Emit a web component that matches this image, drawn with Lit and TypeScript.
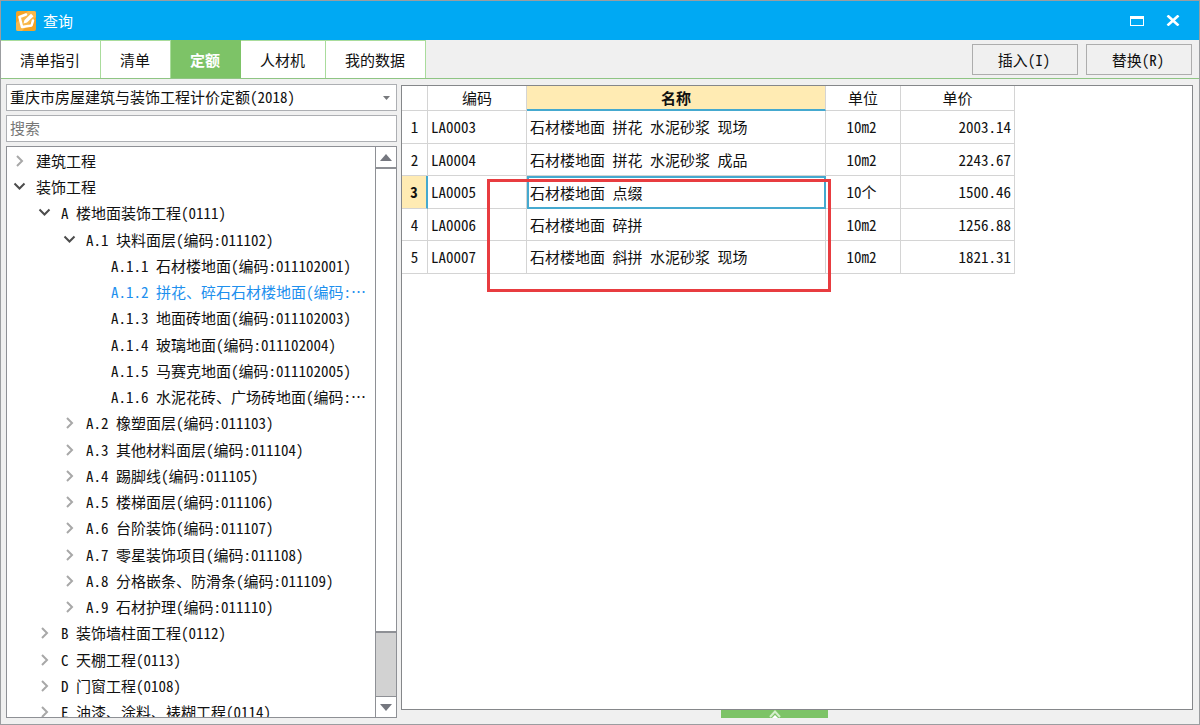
import { LitElement, html, css, svg } from "lit";
import { customElement, property, state } from "lit/decorators.js";
import { classMap } from "lit/directives/class-map.js";

interface TreeNode {
  level: number;
  text: string;
  mark: "open" | "closed" | "leaf";
  selected?: boolean;
}

const NODES: TreeNode[] = [
  { level: 0, text: "建筑工程", mark: "closed" },
  { level: 0, text: "装饰工程", mark: "open" },
  { level: 1, text: "A 楼地面装饰工程(0111)", mark: "open" },
  { level: 2, text: "A.1 块料面层(编码:011102)", mark: "open" },
  { level: 3, text: "A.1.1 石材楼地面(编码:011102001)", mark: "leaf" },
  { level: 3, text: "A.1.2 拼花、碎石石材楼地面(编码:…", mark: "leaf", selected: true },
  { level: 3, text: "A.1.3 地面砖地面(编码:011102003)", mark: "leaf" },
  { level: 3, text: "A.1.4 玻璃地面(编码:011102004)", mark: "leaf" },
  { level: 3, text: "A.1.5 马赛克地面(编码:011102005)", mark: "leaf" },
  { level: 3, text: "A.1.6 水泥花砖、广场砖地面(编码:…", mark: "leaf" },
  { level: 2, text: "A.2 橡塑面层(编码:011103)", mark: "closed" },
  { level: 2, text: "A.3 其他材料面层(编码:011104)", mark: "closed" },
  { level: 2, text: "A.4 踢脚线(编码:011105)", mark: "closed" },
  { level: 2, text: "A.5 楼梯面层(编码:011106)", mark: "closed" },
  { level: 2, text: "A.6 台阶装饰(编码:011107)", mark: "closed" },
  { level: 2, text: "A.7 零星装饰项目(编码:011108)", mark: "closed" },
  { level: 2, text: "A.8 分格嵌条、防滑条(编码:011109)", mark: "closed" },
  { level: 2, text: "A.9 石材护理(编码:011110)", mark: "closed" },
  { level: 1, text: "B 装饰墙柱面工程(0112)", mark: "closed" },
  { level: 1, text: "C 天棚工程(0113)", mark: "closed" },
  { level: 1, text: "D 门窗工程(0108)", mark: "closed" },
  { level: 1, text: "E 油漆、涂料、裱糊工程(0114)", mark: "closed" },
];

const ROWS = [
  ["LA0003", "石材楼地面 拼花 水泥砂浆 现场", "10m2", "2003.14"],
  ["LA0004", "石材楼地面 拼花 水泥砂浆 成品", "10m2", "2243.67"],
  ["LA0005", "石材楼地面 点缀", "10个", "1500.46"],
  ["LA0006", "石材楼地面 碎拼", "10m2", "1256.88"],
  ["LA0007", "石材楼地面 斜拼 水泥砂浆 现场", "10m2", "1821.31"],
];

const reset = css`
  * { box-sizing: border-box; }
  button, select, input {
    font: inherit;
    font-feature-settings: inherit;
    color: inherit;
    margin: 0;
    border-radius: 0;
    outline: none;
  }
`;

@customElement("quota-tree")
class QuotaTree extends LitElement {
  static styles = [reset, css`
    :host { display: flex; min-height: 0; background: #fff; border: 1px solid #8e9095; overflow: hidden; }
    .list { flex: 1; min-width: 0; margin: 0; padding: 1px 0 0; list-style: none; overflow: hidden; }
    .node { display: flex; align-items: center; height: 26px; line-height: 26px; white-space: nowrap; color: #111; }
    .node:nth-child(4n) { height: 27px; }
    .l0 { padding-left: 4px; }
    .l1 { padding-left: 29px; }
    .l2 { padding-left: 54px; }
    .l3 { padding-left: 79px; }
    .selected { color: #1e90ee; }
    .toggle { display: flex; flex: none; align-items: center; justify-content: center; width: 17px; height: 24px; margin-right: 8px; padding: 0; border: 0; background: none; }
    .blank { flex: none; width: 25px; }
    .bar { display: flex; flex-direction: column; flex: none; width: 21px; background: #d2d2d2; border-left: 1px solid #8e9095; }
    .step { display: flex; flex: none; align-items: center; justify-content: center; height: 21px; padding: 0; border: 0; background: #fff; }
    .up { border-bottom: 1px solid #8e9095; }
    .down { border-top: 1px solid #8e9095; }
    .track { flex: 1; }
    .thumb { height: 88%; background: #fff; border: solid #8e9095; border-width: 1px 0 2px; }
  `];

  mark(kind: string) {
    if (kind === "leaf") return html`<span class="blank"></span>`;
    const open = kind === "open";
    return html`<button class="toggle" aria-label=${open ? "收起" : "展开"}>
      <svg width="14" height="14" viewBox="0 0 14 14" fill="none" stroke-width="2">
        ${open
          ? svg`<path d="M1.500 3.500l5 5 5-5" stroke="#4c4c4c" />`
          : svg`<path d="M4 2l5 5-5 5" stroke="#a8a8a8" />`}
      </svg>
    </button>`;
  }

  render() {
    return html`
      <ul class="list" role="tree">
        ${NODES.map((n) => html`<li role="treeitem" class=${classMap({ node: true, ["l" + n.level]: true, selected: !!n.selected })}>
          ${this.mark(n.mark)}<span>${n.text}</span></li>`)}
      </ul>
      <div class="bar">
        <button class="step up" aria-label="向上滚动"><svg width="12" height="7" viewBox="0 0 12 7"><path d="M6 0l6 7H0z" fill="#75777f" /></svg></button>
        <div class="track"><div class="thumb"></div></div>
        <button class="step down" aria-label="向下滚动"><svg width="12" height="7" viewBox="0 0 12 7"><path d="M0 0h12L6 7z" fill="#75777f" /></svg></button>
      </div>`;
  }
}

@customElement("quota-grid")
class QuotaGrid extends LitElement {
  @property({ type: Number }) current = 2;

  static styles = [reset, css`
    :host { display: block; position: relative; background: #fff; border: 1px solid #85878a; overflow: hidden; }
    .grid { border-collapse: separate; border-spacing: 0; table-layout: fixed; width: 613px; line-height: 20px; color: #111; }
    .c-no { width: 26px; }
    .c-code { width: 99px; }
    .c-name { width: 299px; }
    .c-unit { width: 75px; }
    .c-price { width: 114px; }
    th, td { padding: 0 3px; border: solid #d4d4d4; border-width: 0 1px 1px 0; font-weight: 400; white-space: nowrap; overflow: hidden; }
    .head th { height: 25px; }
    .head .active { background: #ffebb3; border-bottom: 2px solid #45a9cf; font-weight: 700; }
    .row td, .row th { height: 33px; }
    .row:nth-child(even) td, .row:nth-child(even) th { height: 32px; }
    .no { padding: 0; text-align: center; }
    .unit { padding-right: 6px; text-align: center; }
    .price { text-align: right; }
    .current .no { background: #ffebb3; font-weight: 700; border-right: 2px solid #45a9cf; }
    .current .name { border: 0; outline: 2px solid #45a9cf; outline-offset: -2px; }
    .marker { position: absolute; left: 85px; top: 93px; width: 344px; height: 113px; border: 3px solid #e83c40; pointer-events: none; }
  `];

  render() {
    return html`
      <table class="grid">
        <colgroup><col class="c-no" /><col class="c-code" /><col class="c-name" /><col class="c-unit" /><col class="c-price" /></colgroup>
        <thead><tr class="head"><th></th><th>编码</th><th class="active">名称</th><th>单位</th><th>单价</th></tr></thead>
        <tbody>
          ${ROWS.map(([code, name, unit, price], i) => html`<tr class=${classMap({ row: true, current: i === this.current })}>
            <th class="no" scope="row">${i + 1}</th><td>${code}</td><td class="name">${name}</td><td class="unit">${unit}</td><td class="price">${price}</td></tr>`)}
        </tbody>
      </table>
      <div class="marker"></div>`;
  }
}

@customElement("app-root")
class AppRoot extends LitElement {
  @state() tab = 2;

  static styles = [reset, css`
    :host {
      display: flex;
      flex-direction: column;
      box-sizing: border-box;
      height: 100vh;
      border: 1px solid #9b9da0;
      background: #f0f0f0;
      color: #111;
      font-family: "Noto Sans CJK SC", sans-serif;
      font-size: 15px;
      line-height: 20px;
      font-feature-settings: "hwid";
    }
    .title { display: flex; align-items: center; flex: none; height: 39px; padding: 0 16px 0 15px; background: #00a9f3; color: #fff; }
    .name { flex: 1; margin-left: 7px; }
    .win { display: flex; align-items: center; justify-content: center; width: 20px; height: 20px; margin-left: 16px; padding: 0; border: 0; background: none; }
    .tools { display: flex; flex: none; height: 39px; padding-right: 7px; border-bottom: 1px solid #8fc584; }
    .tabs { display: flex; flex: 1; }
    .tab { padding: 1px 20px 0 19px; border: solid #a9dc9c; border-width: 1px 1px 0 0; background: #fff; }
    .tab.on { background: #7dc367; border-color: #7dc367; color: #fff; font-weight: 700; }
    .actions { display: flex; gap: 8px; padding: 4px 0 3px; }
    .action { width: 106px; padding: 0 2px 0 0; border: 1px solid #adadad; background: #f0f0f0; }
    .body { display: grid; grid-template-columns: 391px 1fr; flex: 1; gap: 4px; min-height: 0; padding: 5px 6px 6px 5px; }
    .side { display: flex; flex-direction: column; gap: 4px; min-height: 0; }
    .pick { display: flex; align-items: center; position: relative; }
    .field { width: 100%; height: 27px; padding: 0 3px 2px; border: 1px solid #adafb3; background: #fff; appearance: none; }
    .field::placeholder { color: #777; opacity: 1; }
    .caret { position: absolute; right: 7px; pointer-events: none; }
    .tree { flex: 1; }
    .main { display: flex; flex-direction: column; min-width: 0; padding-top: 1px; }
    .sheet { flex: 1; }
    .foot { display: flex; justify-content: center; flex: none; height: 8px; padding-right: 45px; }
    .fold { display: flex; justify-content: center; width: 107px; height: 8px; padding: 0; border: 0; background: #7dc367; }
  `];

  render() {
    const tabs = ["清单指引", "清单", "定额", "人材机", "我的数据"];
    return html`
      <header class="title">
        <svg width="20" height="20" viewBox="0 0 20 20" fill="none">
          <rect width="20" height="20" rx="2" fill="#f3a326" />
          <path d="M0 12L12 0h6a2 2 0 0 1 2 2v4L6 20H2a2 2 0 0 1-2-2z" fill="#f8b84c" />
          <path d="M10 3.500L3.500 6l2.500 10 9.500-1.500 1.500-5" stroke="#fff" stroke-width="2.600" stroke-linejoin="round" stroke-linecap="round" />
          <path d="M7.500 12.500l1-3.500L15 2.800l2.500 2.500L11 11.500z" fill="#fff" />
        </svg>
        <span class="name">查询</span>
        <button class="win" aria-label="最大化"><svg width="14" height="10" viewBox="0 0 14 10"><path d="M0 0h14v10H0zM1 3v6h12V3z" fill="#fff" fill-rule="evenodd" /></svg></button>
        <button class="win" aria-label="关闭"><svg width="14" height="11" viewBox="0 0 14 11"><path d="M1.500 .5l11 10M12.500 .5l-11 10" stroke="#fff" stroke-width="2.600" /></svg></button>
      </header>
      <div class="tools">
        <nav class="tabs">
          ${tabs.map((t, i) => html`<button class=${classMap({ tab: true, on: i === this.tab })} @click=${() => (this.tab = i)}>${t}</button>`)}
        </nav>
        <div class="actions"><button class="action">插入(I)</button><button class="action">替换(R)</button></div>
      </div>
      <div class="body">
        <section class="side">
          <div class="pick">
            <select class="field" aria-label="定额库"><option>重庆市房屋建筑与装饰工程计价定额(2018)</option></select>
            <svg class="caret" width="7" height="4" viewBox="0 0 7 4"><path d="M0 0h7L3.500 4z" fill="#77797c" /></svg>
          </div>
          <input class="field" type="text" placeholder="搜索" aria-label="搜索" />
          <quota-tree class="tree"></quota-tree>
        </section>
        <section class="main">
          <quota-grid class="sheet"></quota-grid>
          <div class="foot"><button class="fold" aria-label="展开面板"><svg width="12" height="8" viewBox="0 0 12 8" fill="none"><path d="M1 7L6 1.500 11 7" stroke="#d5efcb" stroke-width="2" /><path d="M3 8l3-3 3 3z" fill="#fff" /></svg></button></div>
        </section>
      </div>`;
  }
}
